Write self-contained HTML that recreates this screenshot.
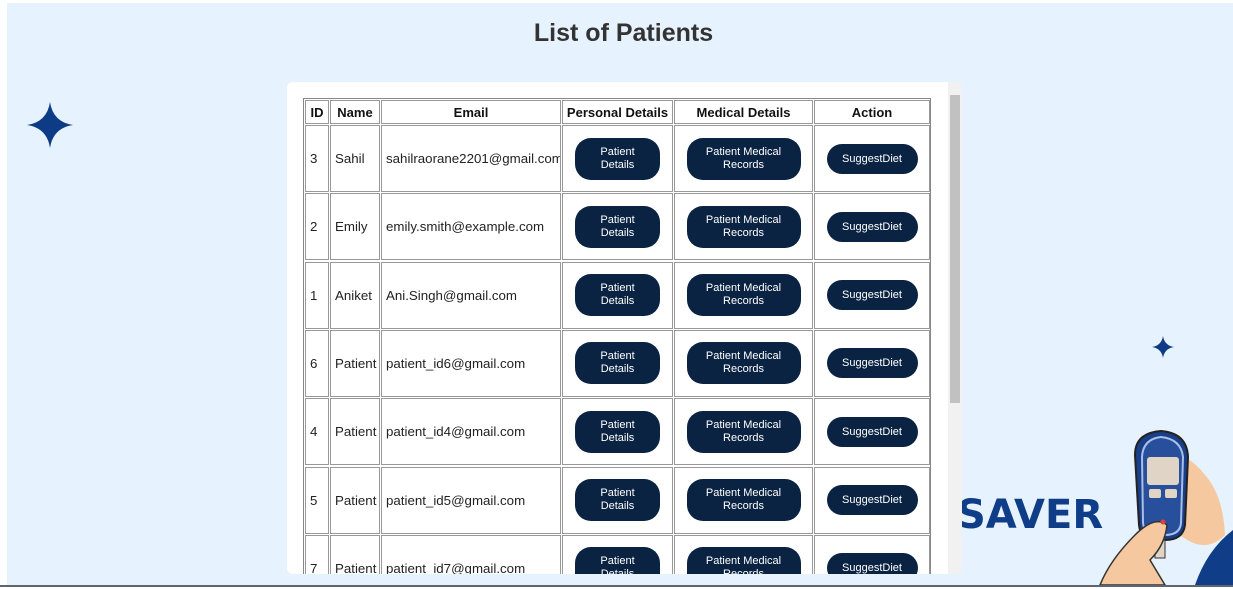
<!DOCTYPE html>
<html><head><meta charset="utf-8"><style>
html,body{margin:0;padding:0;}
body{width:1233px;height:589px;background:#fff;position:relative;overflow:hidden;font-family:"Liberation Sans",Arial,sans-serif;}
.bg{position:absolute;left:7px;top:3px;width:1226px;height:582px;background:#e6f2fd;}
.line{position:absolute;left:0;top:585px;width:1233px;height:2px;background:#5d6670;}
h1{position:absolute;top:19px;left:0;width:1247px;text-align:center;margin:0;font-size:25px;font-weight:bold;color:#333;}
.panel{position:absolute;left:287px;top:82px;width:675px;height:492px;background:#fff;border-radius:6px;overflow:hidden;}
.sb{position:absolute;left:661px;top:0;width:14px;height:492px;background:#f1f1f1;}
.thumb{position:absolute;left:2px;top:13px;width:10px;height:308px;background:#c1c1c1;}
.tbl{position:absolute;left:16px;top:16px;width:626px;height:500px;border:1px solid #888;}
.r{position:absolute;left:1px;display:flex;}
.r>div{box-sizing:border-box;border:1px solid #999;margin-right:1px;display:flex;align-items:center;font-size:13.3px;color:#222;white-space:nowrap;overflow:hidden;padding-left:4px;}
.r>div.c{justify-content:center;padding:0;}
.h>div{justify-content:center;padding:0;font-weight:bold;color:#111;height:24px;font-size:13px;}
.d>div{height:67px;}
.w1{width:24px}.w2{width:50px}.w3{width:180px}.w4{width:111px}.w5{width:139px}.w6{width:116px}
.b{display:inline-block;background:#0a2342;color:#fff;font-size:11px;line-height:13px;border-radius:16px;text-align:center;}
.pd{width:85px;height:42px;padding-top:8px;box-sizing:border-box;}
.md{width:114px;height:42px;padding-top:8px;box-sizing:border-box;}
.sd{width:91px;height:30px;line-height:30px;border-radius:15px;}
.saver{position:absolute;left:957px;top:492px;font-size:40px;font-weight:900;color:#0f3d87;font-family:"DejaVu Sans","Liberation Sans",sans-serif;}
</style></head><body>
<div class="bg"></div>
<h1>List of Patients</h1>
<svg style="position:absolute;left:27px;top:102px" width="46" height="46" viewBox="-23 -23 46 46"><path d="M0,-23 Q3,-3 23,0 Q3,3 0,23 Q-3,3 -23,0 Q-3,-3 0,-23Z" fill="#0d3b85"/></svg>
<svg style="position:absolute;left:1152px;top:336px" width="22" height="22" viewBox="-11 -11 22 22"><path d="M0,-11 Q1.5,-1.5 11,0 Q1.5,1.5 0,11 Q-1.5,1.5 -11,0 Q-1.5,-1.5 0,-11Z" fill="#0d3b85"/></svg>
<div class="saver">SAVER</div>
<svg style="position:absolute;left:1095px;top:425px" width="138" height="160" viewBox="0 0 138 160">
<path d="M100,160 L138,160 L138,105 Q112,125 100,160Z" fill="#0f3d87"/>
<path d="M50,40 Q40,60 50,85 Q60,105 85,110 Q110,130 130,110 Q128,70 110,50 Q95,30 70,25Z" fill="#f6c8a0"/>
<path d="M40,30 Q40,8 66,6 Q92,8 93,32 L90,100 Q88,115 70,115 L58,115 Q45,112 44,100Z" fill="#1a3f8a" stroke="#222" stroke-width="2"/>
<path d="M47,32 Q48,14 66,12 Q86,14 88,32 L86,98 Q85,110 70,110 L58,110 Q49,108 48,98Z" fill="#274f9c" stroke="#a9c0e6" stroke-width="2"/>
<rect x="52" y="32" width="32" height="28" rx="3" fill="#e0d4c6"/>
<rect x="54" y="64" width="12" height="9" rx="2" fill="#e0d4c6"/>
<rect x="70" y="64" width="12" height="9" rx="2" fill="#e0d4c6"/>
<rect x="60" y="115" width="10" height="18" fill="#e0d4c6" stroke="#333"/>
<path d="M5,160 Q15,135 40,110 Q60,90 72,100 Q70,120 55,135 L70,160Z" fill="#f6c8a0" stroke="#333" stroke-width="1.5"/>
<circle cx="68" cy="97" r="2.5" fill="#e0403a"/>
</svg>
<div class="panel">
<div class="tbl">
<div class="r h" style="top:1px"><div class="w1">ID</div><div class="w2">Name</div><div class="w3">Email</div><div class="w4">Personal Details</div><div class="w5">Medical Details</div><div class="w6">Action</div></div>
<div class="r d" style="top:26px"><div class="w1">3</div><div class="w2">Sahil</div><div class="w3">sahilraorane2201@gmail.com</div><div class="w4 c"><span class="b pd">Patient<br>Details</span></div><div class="w5 c"><span class="b md">Patient Medical<br>Records</span></div><div class="w6 c"><span class="b sd">SuggestDiet</span></div></div>
<div class="r d" style="top:94.3px"><div class="w1">2</div><div class="w2">Emily</div><div class="w3">emily.smith@example.com</div><div class="w4 c"><span class="b pd">Patient<br>Details</span></div><div class="w5 c"><span class="b md">Patient Medical<br>Records</span></div><div class="w6 c"><span class="b sd">SuggestDiet</span></div></div>
<div class="r d" style="top:162.6px"><div class="w1">1</div><div class="w2">Aniket</div><div class="w3">Ani.Singh@gmail.com</div><div class="w4 c"><span class="b pd">Patient<br>Details</span></div><div class="w5 c"><span class="b md">Patient Medical<br>Records</span></div><div class="w6 c"><span class="b sd">SuggestDiet</span></div></div>
<div class="r d" style="top:230.9px"><div class="w1">6</div><div class="w2">Patient</div><div class="w3">patient_id6@gmail.com</div><div class="w4 c"><span class="b pd">Patient<br>Details</span></div><div class="w5 c"><span class="b md">Patient Medical<br>Records</span></div><div class="w6 c"><span class="b sd">SuggestDiet</span></div></div>
<div class="r d" style="top:299.2px"><div class="w1">4</div><div class="w2">Patient</div><div class="w3">patient_id4@gmail.com</div><div class="w4 c"><span class="b pd">Patient<br>Details</span></div><div class="w5 c"><span class="b md">Patient Medical<br>Records</span></div><div class="w6 c"><span class="b sd">SuggestDiet</span></div></div>
<div class="r d" style="top:367.5px"><div class="w1">5</div><div class="w2">Patient</div><div class="w3">patient_id5@gmail.com</div><div class="w4 c"><span class="b pd">Patient<br>Details</span></div><div class="w5 c"><span class="b md">Patient Medical<br>Records</span></div><div class="w6 c"><span class="b sd">SuggestDiet</span></div></div>
<div class="r d" style="top:435.8px"><div class="w1">7</div><div class="w2">Patient</div><div class="w3">patient_id7@gmail.com</div><div class="w4 c"><span class="b pd">Patient<br>Details</span></div><div class="w5 c"><span class="b md">Patient Medical<br>Records</span></div><div class="w6 c"><span class="b sd">SuggestDiet</span></div></div>
</div>
<div class="sb"><div class="thumb"></div></div>
</div>
<div class="line"></div>
</body></html>
